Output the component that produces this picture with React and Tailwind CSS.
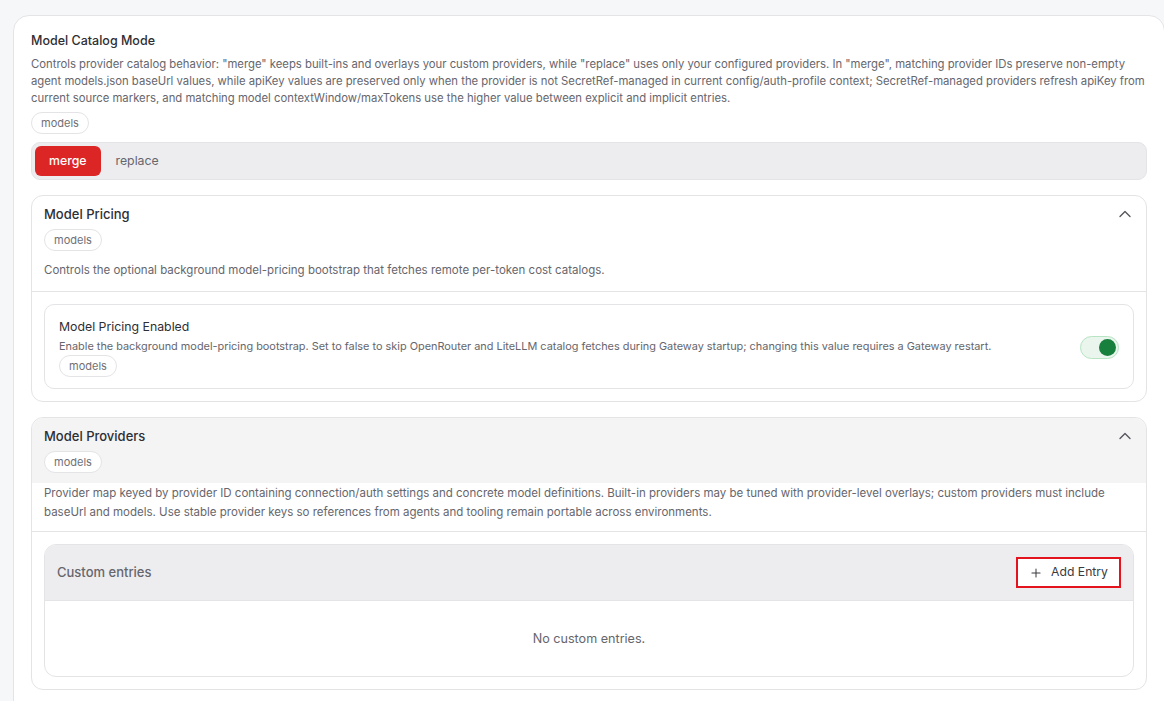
import { ChevronUp, Plus } from 'lucide-react'

function Tag({ children }) {
  return (
    <span className="inline-flex h-[22px] items-center rounded-full border border-[#e4e4e7] bg-white px-[9px] text-[11px] text-[#6f6f76]">
      {children}
    </span>
  )
}

function Toggle({ on }) {
  return (
    <span
      className={
        'flex h-[23px] w-[39px] shrink-0 items-center rounded-full border px-[2px] ' +
        (on ? 'justify-end border-[#b7e4c2] bg-[#eaf5ed]' : 'justify-start border-[#e4e4e7] bg-[#f4f4f5]')
      }
    >
      <span className={'h-[17px] w-[17px] rounded-full ' + (on ? 'bg-[#17803d]' : 'bg-[#a1a1aa]')} />
    </span>
  )
}

function ModeSwitch({ options, value }) {
  return (
    <div className="mt-[8px] flex h-[38px] items-center gap-[1px] rounded-[9px] border border-[#e4e4e7] bg-[#ededef] px-[3px]">
      {options.map((opt) =>
        opt === value ? (
          <span
            key={opt}
            className="flex h-[30px] items-center rounded-[6px] bg-[#dc2626] px-[14px] text-[12.3px] font-medium text-white"
          >
            {opt}
          </span>
        ) : (
          <span key={opt} className="flex h-[30px] items-center px-[14px] text-[12.3px] text-[#66666d]">
            {opt}
          </span>
        )
      )}
    </div>
  )
}

function SectionHeader({ title }) {
  return (
    <div className="flex items-center justify-between">
      <h3 className="text-[13px] font-medium leading-[17px] text-[#2e2e33]">{title}</h3>
      <ChevronUp size={20} strokeWidth={1.6} className="mr-[2px] text-[#55555c]" />
    </div>
  )
}

export default function App() {
  return (
    <div
      className="min-h-[701px] overflow-hidden bg-[#f6f7f9] pl-[13px] pt-[15px]"
      style={{ fontFamily: 'Inter, "Noto Sans", sans-serif' }}
    >
      <div className="w-[1152px] rounded-tl-[16px] rounded-tr-[16px] border border-[#e4e4e7] bg-white pb-[20px] pl-[17px] pr-[17px] pt-[16px]">
        {/* catalog mode */}
        <h2 className="text-[12.5px] font-medium leading-[17px] text-[#2e2e33]">Model Catalog Mode</h2>
        <p className="mt-[7px] text-[11.3px] leading-[17px] text-[#66666d]">
          Controls provider catalog behavior: "merge" keeps built-ins and overlays your custom providers, while "replace" uses only your configured providers. In "merge", matching provider IDs preserve non-empty agent models.json baseUrl values, while apiKey values are preserved only when the provider is not SecretRef-managed in current config/auth-profile context; SecretRef-managed providers refresh apiKey from current source markers, and matching model contextWindow/maxTokens use the higher value between explicit and implicit entries.
        </p>
        <div className="mt-[5px] flex">
          <Tag>models</Tag>
        </div>
        <ModeSwitch options={['merge', 'replace']} value="merge" />

        {/* pricing */}
        <section className="mt-[15px] rounded-[12px] border border-[#e4e4e7] bg-white pb-[12px]">
          <div className="pl-[12px] pr-[9px] pt-[8px]">
            <SectionHeader title="Model Pricing" />
            <div className="mt-[5px] flex">
              <Tag>models</Tag>
            </div>
            <p className="mt-[11px] pb-[12px] text-[11.5px] leading-[17px] text-[#66666d]">
              Controls the optional background model-pricing bootstrap that fetches remote per-token cost catalogs.
            </p>
          </div>
          <div className="border-t border-[#e4e4e7] px-[12px] pt-[12px]">
            <div className="flex items-center justify-between rounded-[10px] border border-[#e4e4e7] pb-[11px] pl-[14px] pr-[14px] pt-[13px]">
              <div>
                <div className="text-[12.3px] leading-[17px] text-[#2e2e33]">Model Pricing Enabled</div>
                <p className="mt-[3px] text-[10.9px] leading-[16px] text-[#66666d]">
                  Enable the background model-pricing bootstrap. Set to false to skip OpenRouter and LiteLLM catalog fetches during Gateway startup; changing this value requires a Gateway restart.
                </p>
                <div className="mt-[1px] flex">
                  <Tag>models</Tag>
                </div>
              </div>
              <Toggle on />
            </div>
          </div>
        </section>

        {/* providers */}
        <section className="mt-[15px] rounded-[12px] border border-[#e4e4e7] bg-white pb-[12px]">
          <div className="rounded-t-[12px] bg-[#f4f4f5] pb-[10px] pl-[12px] pr-[9px] pt-[8px]">
            <SectionHeader title="Model Providers" />
            <div className="mt-[5px] flex">
              <Tag>models</Tag>
            </div>
          </div>
          <p className="px-[12px] pb-[9px] pt-[1px] text-[11.5px] leading-[19px] text-[#66666d]">
            Provider map keyed by provider ID containing connection/auth settings and concrete model definitions. Built-in providers may be tuned with provider-level overlays; custom providers must include baseUrl and models. Use stable provider keys so references from agents and tooling remain portable across environments.
          </p>
          <div className="border-t border-[#e4e4e7] px-[12px] pt-[12px]">
            <div className="overflow-hidden rounded-[12px] border border-[#e4e4e7]">
              <div className="flex h-[56px] items-center justify-between border-b border-[#e4e4e7] bg-[#ededef] pl-[12px] pr-[12px]">
                <span className="text-[13px] font-medium text-[#66666d]">Custom entries</span>
                <button className="flex h-[31px] w-[105px] items-center justify-center gap-[8px] border-2 border-[#e3141e] bg-white text-[12.2px] text-[#3a3a40]">
                  <Plus size={14} strokeWidth={1.75} />
                  Add Entry
                </button>
              </div>
              <div className="flex h-[75px] items-center justify-center pt-[2px] text-[12.6px] text-[#66666d]">
                No custom entries.
              </div>
            </div>
          </div>
        </section>
      </div>
    </div>
  )
}
